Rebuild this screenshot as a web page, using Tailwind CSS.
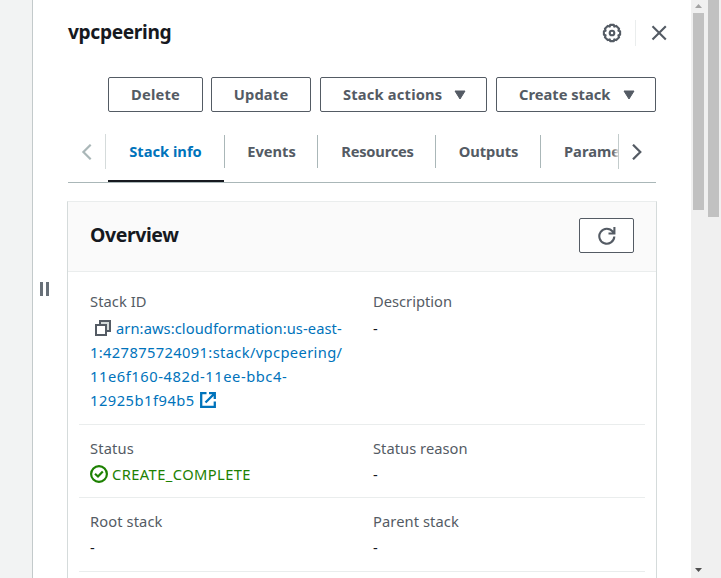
<!DOCTYPE html>
<html lang="en">
<head>
<meta charset="utf-8">
<title>vpcpeering</title>
<script src="https://cdn.jsdelivr.net/npm/@tailwindcss/browser@4"></script>
</head>
<body class="flex h-[578px] w-[721px] overflow-hidden bg-white font-['Noto_Sans',sans-serif] text-[14.7px] leading-6 text-[#16191f]">
<aside class="w-[33px] shrink-0 border-r border-[#c3cacb] bg-[#f2f3f3]"></aside>
<div class="flex w-[34px] shrink-0 items-start justify-center pt-[282px] pr-[12px]">
  <div class="flex gap-[3px]"><span class="h-[14px] w-[3px] bg-[#687078]"></span><span class="h-[14px] w-[3px] bg-[#687078]"></span></div>
</div>
<main class="w-[590px] shrink-0">
  <header class="-mr-[11px] flex h-[77px] items-start pt-[19px] pl-px">
    <h1 class="flex-1 text-[19.2px] leading-[26px] font-bold tracking-[-.36px]">vpcpeering</h1>
    <svg class="mt-[4px] h-5 w-5" viewBox="0 0 20 20" fill="none" stroke="#545b64" stroke-width="2.1" stroke-linejoin="round"><path d="M8.2 1.9h3.6l.5 1.7 2-.7 2.8 2.8-.7 2 1.7.5v3.6l-1.7.5.7 2-2.8 2.8-2-.7-.5 1.7H8.2l-.5-1.7-2 .7-2.8-2.8.7-2-1.7-.5V8.2l1.7-.5-.7-2 2.8-2.8 2 .7z"/><circle cx="10" cy="10" r="2.3"/></svg>
    <span class="mt-px ml-[13px] h-[26px] w-px bg-[#eaeded]"></span>
    <svg class="mt-[6px] mr-px ml-[15px] h-4 w-4" viewBox="0 0 16 16" fill="none" stroke="#545b64" stroke-width="2.1"><path d="M1.5 1.2 14.8 14.5M14.8 1.2 1.5 14.5"/></svg>
  </header>
  <div class="flex h-[35px] pl-[41px] font-bold tracking-[.18px] text-[#545b64]">
    <button class="w-[95px] rounded-[2px] border border-[#545b64] pb-[2px]">Delete</button>
    <button class="ml-[8px] w-[100px] rounded-[2px] border border-[#545b64] pb-[2px]">Update</button>
    <button class="ml-[9px] flex w-[167px] items-center justify-between rounded-[2px] border border-[#545b64] pr-[20px] pl-[22px]"><span class="pb-[2px] whitespace-nowrap">Stack actions</span><svg class="h-[10px] w-3" viewBox="0 0 12 10" fill="#545b64" stroke="#545b64" stroke-linejoin="round"><path d="M1 1h10L6 9z"/></svg></button>
    <button class="ml-[9px] flex w-[160px] items-center justify-between rounded-[2px] border border-[#545b64] pr-[20px] pl-[22px]"><span class="pb-[2px] tracking-[0px] whitespace-nowrap">Create stack</span><svg class="h-[10px] w-3" viewBox="0 0 12 10" fill="#545b64" stroke="#545b64" stroke-linejoin="round"><path d="M1 1h10L6 9z"/></svg></button>
  </div>
  <nav class="mx-px mt-[22px] flex h-[49px] border-b border-[#aab7b8] font-bold text-[#545b64]">
    <span class="flex h-[35px] w-[38px] items-center justify-center border-r border-[#d5dbdb]"><svg class="h-4 w-3" viewBox="0 0 12 16" fill="none" stroke="#aab7b8" stroke-width="2.2"><path d="M9.7 .7 2.4 8l7.3 7.3"/></svg></span>
    <span class="ml-[2px] flex h-[48px] w-[116px] justify-center border-b-[2px] border-[#16191f] pt-[5px] pr-px text-[#0073bb]">Stack info</span>
    <span class="mt-px flex h-[33px] w-[94px] justify-center border-x border-[#aab7b8] pt-[4px] pl-px">Events</span>
    <span class="mt-px flex h-[33px] w-[118px] justify-center border-r border-[#aab7b8] pt-[4px] pl-[2px] tracking-[-.22px]">Resources</span>
    <span class="mt-px flex h-[33px] w-[105px] justify-center border-r border-[#aab7b8] pt-[4px] pl-px tracking-[-.1px]">Outputs</span>
    <span class="h-[36px] w-[77px] shrink-0 overflow-hidden pt-[5px] pl-[23px]">Parameters</span>
    <span class="flex h-[35px] w-[38px] shrink-0 items-center justify-center border-l border-[#c3cccc] bg-white pr-[2px] shadow-[-4px_0_5px_-2px_#ffffff]"><svg class="h-4 w-3" viewBox="0 0 12 16" fill="none" stroke="#545b64" stroke-width="2.2"><path d="m2 .7 7.3 7.3L2 15.3"/></svg></span>
  </nav>
  <section class="mt-[18px] h-[400px] border-x border-t border-[#d5dbdb] border-t-[#eaeded]">
    <div class="flex h-[70px] items-center justify-between border-b border-[#eaeded] bg-[#fafafa] pr-[22px] pl-[22px]">
      <h2 class="pb-[3px] text-[19.5px] font-bold tracking-[-.42px]">Overview</h2>
      <button class="mb-[2px] flex h-[35px] w-[55px] items-center justify-center rounded-[2px] border border-[#545b64] bg-white"><svg class="h-[18px] w-[18px]" viewBox="0 0 18 18" fill="none" stroke="#545b64" stroke-width="2.1"><path d="M16.3 9.5A7.5 7.5 0 1 1 14.8 4.7L16.2 6.3M16.4 0v6.5H10.5"/></svg></button>
    </div>
    <div class="px-[11px]">
      <div class="flex h-[153px] border-b border-[#eaeded] px-[11px] pt-[17px]">
        <div class="w-[283px]">
          <div class="mb-[2px] h-[25px] tracking-[.08px] text-[#545b64]">Stack ID</div>
          <div class="whitespace-nowrap text-[#0073bb]">
            <div class="flex"><svg class="mt-[4px] mr-[5px] ml-[5px] h-4 w-4" viewBox="0 0 16 16" fill="none" stroke="#545b64" stroke-width="2"><path d="M5 5V1h10v10h-4" fill="#d5dbdb"/><path d="M1 5h10v10H1z" fill="#fff"/></svg><span class="tracking-[.08px]">arn:aws:cloudformation:us-east-</span></div>
            <div class="tracking-[.37px]">1:427875724091:stack/vpcpeering/</div>
            <div class="tracking-[.56px]">11e6f160-482d-11ee-bbc4-</div>
            <div class="flex"><span class="tracking-[.5px]">12925b1f94b5</span><svg class="mt-[4px] ml-[5px] h-4 w-4" viewBox="0 0 16 16" fill="none" stroke="#0073bb" stroke-width="2.3"><path d="M6.5 1.2H1.2v13.6h13.6V9.5M9 1.2h5.8V7M14.8 1.2 5.5 10.5"/></svg></div>
          </div>
        </div>
        <div><div class="mb-[2px] h-[25px] text-[#545b64]">Description</div><div>-</div></div>
      </div>
      <div class="flex h-[73px] border-b border-[#eaeded] px-[11px] pt-[11px]">
        <div class="w-[283px]"><div class="mb-[2px] h-6 tracking-[.15px] text-[#545b64]">Status</div><div class="flex text-[#1d8102]"><svg class="mt-[3px] mr-[4px] h-[18px] w-[18px]" viewBox="0 0 18 18" fill="none" stroke="#1d8102" stroke-width="2.2"><circle cx="9" cy="9" r="7.9"/><path d="m5 8.7 3 2.8L12.8 6.5"/></svg><span class="tracking-[.42px]">CREATE_COMPLETE</span></div></div>
        <div><div class="mb-[2px] h-6 tracking-[.04px] text-[#545b64]">Status reason</div><div>-</div></div>
      </div>
      <div class="flex h-[74px] border-b border-[#eaeded] px-[11px] pt-[11px]">
        <div class="w-[283px]"><div class="mb-[2px] h-6 tracking-[.1px] text-[#545b64]">Root stack</div><div>-</div></div>
        <div><div class="mb-[2px] h-6 tracking-[.08px] text-[#545b64]">Parent stack</div><div>-</div></div>
      </div>
    </div>
  </section>
</main>
<div class="w-[34px] shrink-0"></div>
<div class="flex w-[15px] shrink-0 flex-col items-center bg-[#f0f0f0]">
  <svg class="mt-[4px] h-[4px] w-[7px] shrink-0" viewBox="0 0 7 4" fill="#a3a3a3"><path d="M0 4 3.5 0 7 4z"/></svg>
  <div class="mt-[5px] h-[197px] w-[11px] shrink-0 bg-[#c1c1c1]"></div>
  <svg class="mt-auto mb-[6px] h-[4px] w-[7px] shrink-0" viewBox="0 0 7 4" fill="#505050"><path d="M0 0h7L3.5 4z"/></svg>
</div>
<div class="flex w-[15px] shrink-0 justify-center bg-[#f0f0f0]"><div class="h-[217px] w-[11px] bg-[#c1c1c1]"></div></div>
</body>
</html>
